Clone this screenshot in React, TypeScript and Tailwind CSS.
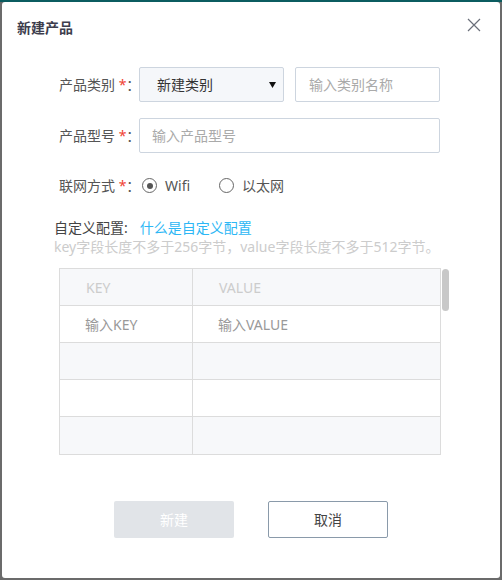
const font = { fontFamily: '"Noto Sans", "Noto Sans CJK SC", sans-serif' };

function Label({ text }: { text: string }) {
  return (
    <div className="w-[80px] shrink-0 whitespace-nowrap text-[14px] text-[#555]">
      {text} <span className="text-[#f04134]">*</span>：
    </div>
  );
}

function Radio({ checked, label }: { checked?: boolean; label: string }) {
  return (
    <label className="flex items-center gap-[8px] text-[14px] text-[#555]">
      <span className="w-[15px] h-[15px] rounded-full border-[1.5px] border-[#666] flex items-center justify-center">
        {checked && <span className="w-[6px] h-[6px] rounded-full bg-[#555]" />}
      </span>
      {label}
    </label>
  );
}

export default function App() {
  const rows = [
    { key: '输入KEY', value: '输入VALUE' },
    { key: '', value: '' },
    { key: '', value: '' },
    { key: '', value: '' },
  ];

  return (
    <div style={font} className="w-[502px] h-[580px] bg-[#6b6b6b] border-t-2 border-[#0b5c60] px-[2px] pb-[2px]">
      <div className="w-[498px] h-[576px] bg-white rounded-[3px] flex flex-col">
        <div className="h-[50px] pl-[15px] pr-[19px] flex items-center justify-between">
          <span className="text-[14px] font-bold text-[#3d3d4d]">新建产品</span>
          <svg width="14" height="14" viewBox="0 0 14 14" className="mt-[-4px]">
            <path d="M1 1 L13 13 M13 1 L1 13" stroke="#6a6f7a" strokeWidth="1.2" fill="none" />
          </svg>
        </div>

        <div className="mt-[15px] pl-[57px] flex flex-col gap-[16px]">
          <div className="flex items-center">
            <Label text="产品类别" />
            <div className="w-[145px] h-[35px] border border-[#cdd5df] rounded-[2px] bg-[#f5f7fa] pl-[17px] pr-[7px] flex items-center justify-between">
              <span className="text-[14px] text-[#333]">新建类别</span>
              <svg width="7" height="6" viewBox="0 0 7 6">
                <path d="M0 0 L7 0 L3.5 6 Z" fill="#111" />
              </svg>
            </div>
            <div className="ml-[11px] w-[145px] h-[35px] border border-[#cdd5df] rounded-[2px] pl-[13px] flex items-center text-[14px] text-[#aaa]">
              输入类别名称
            </div>
          </div>

          <div className="flex items-center">
            <Label text="产品型号" />
            <div className="w-[301px] h-[35px] border border-[#cdd5df] rounded-[2px] pl-[12px] flex items-center text-[14px] text-[#aaa]">
              输入产品型号
            </div>
          </div>

          <div className="flex items-center h-[33px]">
            <Label text="联网方式" />
            <div className="ml-[3px] flex items-center gap-[29px]">
              <Radio checked label="Wifi" />
              <Radio label="以太网" />
            </div>
          </div>
        </div>

        <div className="mt-[16px] pl-[52px] text-[14px] leading-[19px]">
          <div className="text-[#444]">
            自定义配置:
            <span className="ml-[12px] text-[#2db7f5]">什么是自定义配置</span>
          </div>
          <div className="text-[#ccc]">key字段长度不多于256字节，value字段长度不多于512字节。</div>
        </div>

        <div className="mt-[12px] ml-[57px] w-[390px] flex">
          <div className="w-[382px] border border-[#dcdcdc] text-[14px]">
            <div className="flex h-[37px] bg-[#f7f8fa] border-b border-[#dcdcdc]">
              <div className="w-[133px] border-r border-[#dcdcdc] pl-[26px] flex items-center text-[#ccc]">KEY</div>
              <div className="flex-1 pl-[26px] flex items-center text-[#ccc]">VALUE</div>
            </div>
            {rows.map((r, i) => (
              <div
                key={i}
                className={`flex h-[37px] ${i < rows.length - 1 ? 'border-b border-[#dcdcdc]' : ''} ${
                  i % 2 === 1 ? 'bg-[#f7f8fa]' : 'bg-white'
                }`}
              >
                <div className="w-[133px] border-r border-[#dcdcdc] pl-[25px] flex items-center text-[#999]">{r.key}</div>
                <div className="flex-1 pl-[25px] flex items-center text-[#999]">{r.value}</div>
              </div>
            ))}
          </div>
          <div className="ml-[1px] mt-[1px] w-[7px] h-[42px] rounded-[4px] bg-[#c8c8c8]" />
        </div>

        <div className="mt-[46px] flex justify-center gap-[34px]">
          <button className="w-[120px] h-[37px] rounded-[2px] bg-[#e1e4e8] text-[14px] text-white">新建</button>
          <button className="w-[120px] h-[37px] rounded-[2px] border border-[#8a9aaa] bg-white text-[14px] text-[#444]">取消</button>
        </div>
      </div>
    </div>
  );
}
